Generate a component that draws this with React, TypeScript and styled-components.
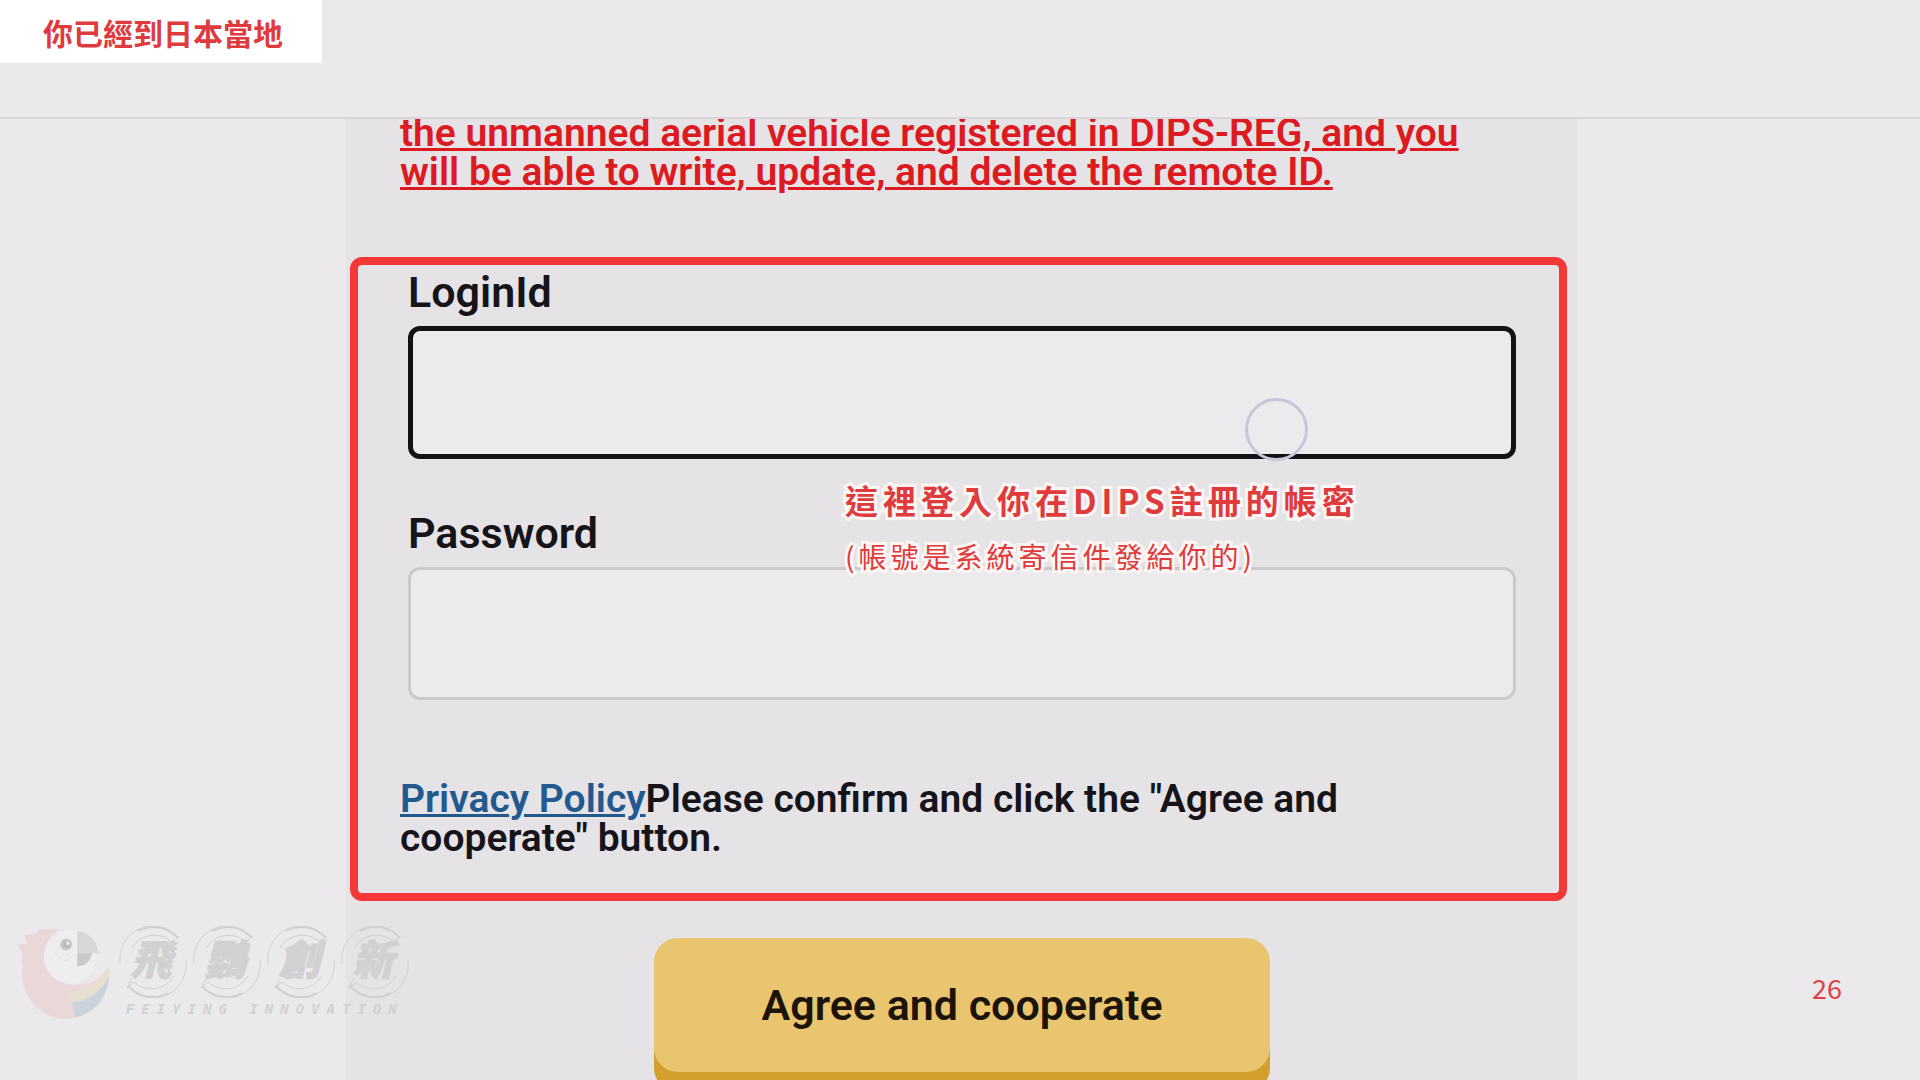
import React from "react";
import styled, { createGlobalStyle } from "styled-components";

const GlobalStyle = createGlobalStyle`
  *, *::before, *::after { box-sizing: border-box; }
  body {
    margin: 0;
    background: #ebe9ec;
    color: #161419;
    font-family: Roboto, "Liberation Sans", sans-serif;
  }
`;

const cjk = `"Noto Sans CJK TC", "Noto Sans", sans-serif`;

const Page = styled.div`
  position: relative;
  display: flex;
  flex-direction: column;
  min-height: 100vh;
  overflow: hidden;
`;

const Header = styled.header`
  display: flex;
  align-items: flex-start;
  height: 119px;
  border-bottom: 2px solid #d8d6d9;
`;

const StageTag = styled.h1`
  margin: 0;
  padding: 10px 39px 9px 43px;
  background: #fff;
  color: #df3b3f;
  font: 700 30px/44px ${cjk};
`;

const Content = styled.div`
  flex: 1;
  display: grid;
  grid-template-columns: 346px minmax(0, 1fr) 342px;
`;

const Column = styled.main`
  grid-column: 2;
  display: flex;
  flex-direction: column;
  align-items: center;
  overflow: hidden;
  background: #e5e3e6;
`;

const Paragraph = styled.p`
  margin: 0;
  font-size: 39px;
  line-height: 39px;
  font-weight: 600;
`;

const Notice = styled(Paragraph)`
  align-self: stretch;
  margin-top: -5px;
  padding: 0 62px 0 54px;
  color: #dc1a1f;
  text-decoration: underline;
  text-decoration-thickness: 3px;
`;

const LoginForm = styled.form`
  position: relative;
  align-self: stretch;
  margin: 65px 11px 37px 4px;
  padding: 3px 43px 35px 42px;
  border: 8px solid #f43838;
  border-radius: 12px;
`;

const Field = styled.div`
  position: relative;
  display: flex;
  flex-direction: column;
  gap: 10px;
  margin: 0 0 50px 8px;
`;

const Label = styled.label`
  font-size: 43px;
  line-height: 48px;
  font-weight: 600;
`;

const TextInput = styled.input<{ $active?: boolean }>`
  width: 100%;
  height: 133px;
  padding: 0 24px;
  border: ${(p) => (p.$active ? "5px solid #131116" : "3px solid #cbc9cc")};
  border-radius: 12px;
  background: #eceaed;
  font: 500 43px Roboto, sans-serif;
  color: inherit;
  outline: none;
`;

const TouchMark = styled.span`
  position: absolute;
  right: 208px;
  bottom: -2px;
  width: 63px;
  height: 63px;
  border: 3px solid #c8c5dc;
  border-radius: 50%;
  pointer-events: none;
`;

const Callout = styled.div`
  position: absolute;
  top: 207px;
  left: 487px;
  color: #df3a3c;
  font-family: ${cjk};
  white-space: nowrap;
  paint-order: stroke fill;
  -webkit-text-stroke: 6px #fbf6f4;
  pointer-events: none;
`;

const CalloutTitle = styled.p`
  margin: 0;
  font-size: 33px;
  line-height: 56px;
  font-weight: 700;
  letter-spacing: 5px;
`;

const CalloutNote = styled.p`
  margin: 0;
  font-size: 28px;
  line-height: 56px;
  letter-spacing: 4px;
`;

const Consent = styled(Paragraph)`
  padding-top: 30px;
`;

const PolicyLink = styled.a`
  color: #22598f;
  text-decoration: underline;
  text-decoration-thickness: 3px;
`;

const SubmitButton = styled.button`
  width: 50%;
  height: 134px;
  border: 0;
  border-radius: 24px;
  background: #eac56f;
  box-shadow: 0 20px 0 #d4a02d;
  color: #1c1408;
  font: 600 43px/48px Roboto, sans-serif;
  cursor: pointer;
`;

const Overlay = styled.footer`
  position: absolute;
  left: 15px;
  right: 78px;
  bottom: 60px;
  display: flex;
  align-items: flex-end;
  justify-content: space-between;
  pointer-events: none;
`;

const PageNumber = styled.span`
  padding-bottom: 12px;
  color: #dc4248;
  font: 400 27px/40px ${cjk};
`;

const Watermark = styled.div`
  display: flex;
  gap: 6px;
  color: #d2d0d3;
`;

const Brand = styled.div`
  display: flex;
  flex-direction: column;
`;

const BrandName = styled.div`
  display: flex;
  gap: 4px;
`;

const BrandGlyph = styled.span`
  position: relative;
  display: flex;
  justify-content: center;
  width: 70px;
  height: 72px;
  padding-right: 4px;
  font: italic 900 41px/62px ${cjk};
  -webkit-text-stroke: 1px currentColor;
`;

const RingArt = styled.svg`
  position: absolute;
  inset: 0;
  width: 100%;
  height: 100%;
`;

const BrandLatin = styled.span`
  padding-left: 8px;
  font: italic 700 14px/22px "DejaVu Sans Mono", monospace;
  letter-spacing: 7px;
  white-space: nowrap;
`;

const Ring = () => (
  <RingArt viewBox="0 0 70 72" fill="none" stroke="currentColor" aria-hidden="true">
    <path d="M2 38A33 34 0 0 1 60 12" strokeWidth="1" />
    <path d="M20 5A33 34 0 0 1 60 12" strokeWidth="2" />
    <path d="M68 34A33 34 0 0 1 10 60" strokeWidth="1" />
    <path d="M50 67A33 34 0 0 1 10 60" strokeWidth="2" />
    <path d="M14 22A26 26 0 0 1 54 16L61 10" strokeWidth="1" />
    <path d="M56 50A26 26 0 0 1 16 56L9 62L14 52" strokeWidth="1" />
  </RingArt>
);

const Parrot = () => (
  <svg width="97" height="94" viewBox="45 75 290 280" aria-hidden="true">
    <path
      fill="#ead8d9"
      d="M112 85L115 94L72 102L82 127L52 130L68 158C62 172 66 186 67 196C56 272 112 352 195 352C275 352 332 290 326 198C300 240 260 252 215 250C165 245 132 210 132 165C132 125 150 100 182 85Z"
    />
    <circle cx="210" cy="167" r="79" fill="#efedf0" />
    <path fill="#e9dfd0" d="M204 274C250 268 285 248 318 205L326 200C326 225 322 240 312 258C290 285 255 300 216 303Z" />
    <path fill="#cbd4dc" d="M216 303C262 298 298 276 326 226C322 290 280 335 226 347Z" />
    <path fill="#d8d6d9" d="M231 90C262 92 288 115 292 146L299 157L231 157Z" />
    <path fill="#cac8cb" d="M231 156L275 156C272 180 255 194 231 195Z" />
    <circle cx="198" cy="130" r="18" fill="#c9c9cd" />
    <circle cx="199" cy="130" r="11" fill="#b9b9be" />
    <circle cx="203" cy="126" r="5" fill="#efedf0" />
    <path d="M165 150C170 175 200 188 214 166M178 152C185 162 205 166 214 150" fill="none" stroke="#dddbde" strokeWidth="2" />
  </svg>
);

export default function App() {
  return (
    <>
      <GlobalStyle />
      <Page>
        <Header>
          <StageTag lang="zh-Hant">你已經到日本當地</StageTag>
        </Header>
        <Content>
          <Column>
            <Notice>
              the unmanned aerial vehicle registered in DIPS-REG, and you will be able to write,
              update, and delete the remote ID.
            </Notice>
            <LoginForm onSubmit={(e) => e.preventDefault()} id="login">
              <Field>
                <Label htmlFor="loginId">LoginId</Label>
                <TextInput id="loginId" type="text" $active />
                <TouchMark />
              </Field>
              <Field>
                <Label htmlFor="password">Password</Label>
                <TextInput id="password" type="password" />
              </Field>
              <Consent>
                <PolicyLink href="#privacy">Privacy Policy</PolicyLink>
                Please confirm and click the "Agree and cooperate" button.
              </Consent>
              <Callout lang="zh-Hant">
                <CalloutTitle>這裡登入你在DIPS註冊的帳密</CalloutTitle>
                <CalloutNote>(帳號是系統寄信件發給你的)</CalloutNote>
              </Callout>
            </LoginForm>
            <SubmitButton type="submit" form="login">
              Agree and cooperate
            </SubmitButton>
          </Column>
        </Content>
        <Overlay>
          <Watermark>
            <Parrot />
            <Brand>
              <BrandName lang="zh-Hant">
                {["飛", "鸚", "創", "新"].map((glyph) => (
                  <BrandGlyph key={glyph}>
                    <Ring />
                    {glyph}
                  </BrandGlyph>
                ))}
              </BrandName>
              <BrandLatin>FEIYING INNOVATION</BrandLatin>
            </Brand>
          </Watermark>
          <PageNumber>26</PageNumber>
        </Overlay>
      </Page>
    </>
  );
}
